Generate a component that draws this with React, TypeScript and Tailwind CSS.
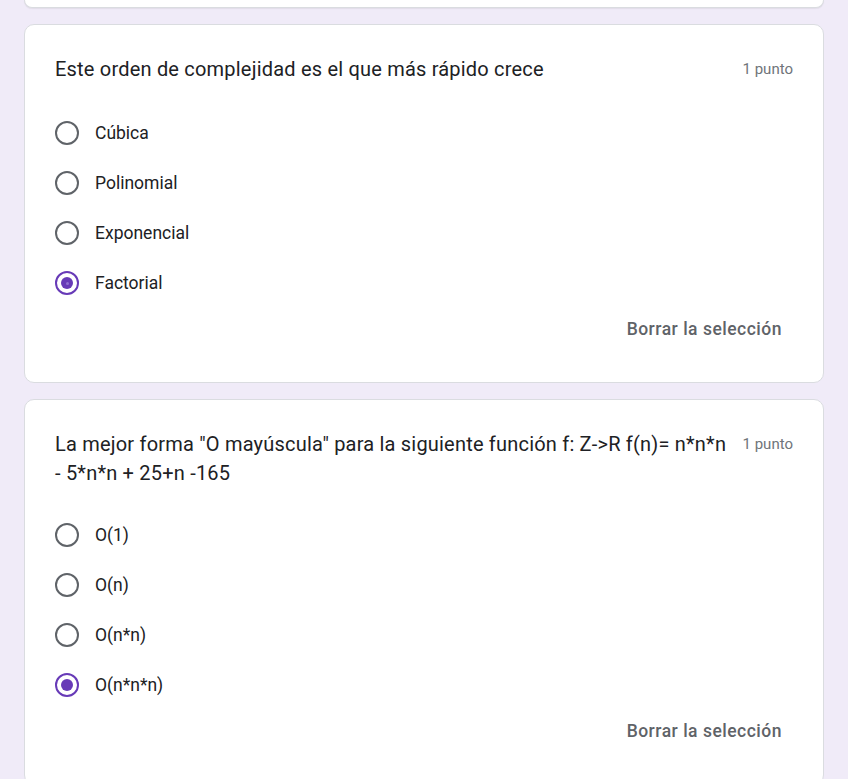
import React from "react";

type Question = {
    title: string;
    options: string[];
    selected: number;
    fresh?: boolean;
};

const questions: Question[] = [
    {
        title: "Este orden de complejidad es el que más rápido crece",
        options: ["Cúbica", "Polinomial", "Exponencial", "Factorial"],
        selected: 3,
        fresh: true,
    },
    {
        title: 'La mejor forma "O mayúscula" para la siguiente función f: Z->R f(n)= n*n*n - 5*n*n + 25+n -165',
        options: ["O(1)", "O(n)", "O(n*n)", "O(n*n*n)"],
        selected: 3,
    },
];

const Radio = ({ checked, fresh }: { checked: boolean; fresh?: boolean }) => (
    <div
        className={`w-[24px] h-[24px] rounded-full border-2 flex items-center justify-center shrink-0 ${
            checked ? "border-[#673ab7]" : "border-[#5f6368]"
        }`}
    >
        {checked && (
            <div className="w-[12px] h-[12px] rounded-full bg-[#673ab7] flex items-center justify-center">
                {/* ripple still running on the first one */}
                {fresh && <div className="w-[3px] h-[3px] rounded-full bg-[#8f6fd0]" />}
            </div>
        )}
    </div>
);

const QuestionCard = ({ q }: { q: Question }) => (
    <div className="w-[800px] bg-white border border-[#dadce0] rounded-[10px] px-[30px] pt-[30px] pb-[32px]">
        {/* title + points */}
        <div className="flex items-start min-h-[31px]">
            <div className="flex-1 text-[20px] leading-[29px] text-[#202124] tracking-[0.2px]">{q.title}</div>
            <div className="ml-[12px] text-[15px] leading-[29px] text-[#70757a]">1 punto</div>
        </div>

        {/* options */}
        <div className="mt-[22px] flex flex-col">
            {q.options.map((opt, i) => (
                <div key={opt} className="h-[50px] flex items-center">
                    <Radio checked={i === q.selected} fresh={q.fresh} />
                    <span className="ml-[16px] text-[17.5px] text-[#202124]">{opt}</span>
                </div>
            ))}
        </div>

        <div className="h-[42px] flex items-center justify-end">
            <span className="pr-[11px] text-[17.5px] font-medium text-[#5f6368] tracking-[0.5px]">
                Borrar la selección
            </span>
        </div>
    </div>
);

export default function App() {
    return (
        <div
            className="min-h-screen bg-[#f0ebf8] pl-[24px] flex flex-col gap-[16px] overflow-hidden"
            style={{ fontFamily: "Roboto, 'Liberation Sans', sans-serif" }}
        >
            {/* bottom of the previous card, scrolled off */}
            <div className="w-[800px] h-[8px] bg-white border border-t-0 border-[#dadce0] rounded-b-[10px] shadow-[0_1px_1px_rgba(60,64,67,0.08)]" />
            {questions.map((q) => (
                <QuestionCard key={q.title} q={q} />
            ))}
        </div>
    );
}
